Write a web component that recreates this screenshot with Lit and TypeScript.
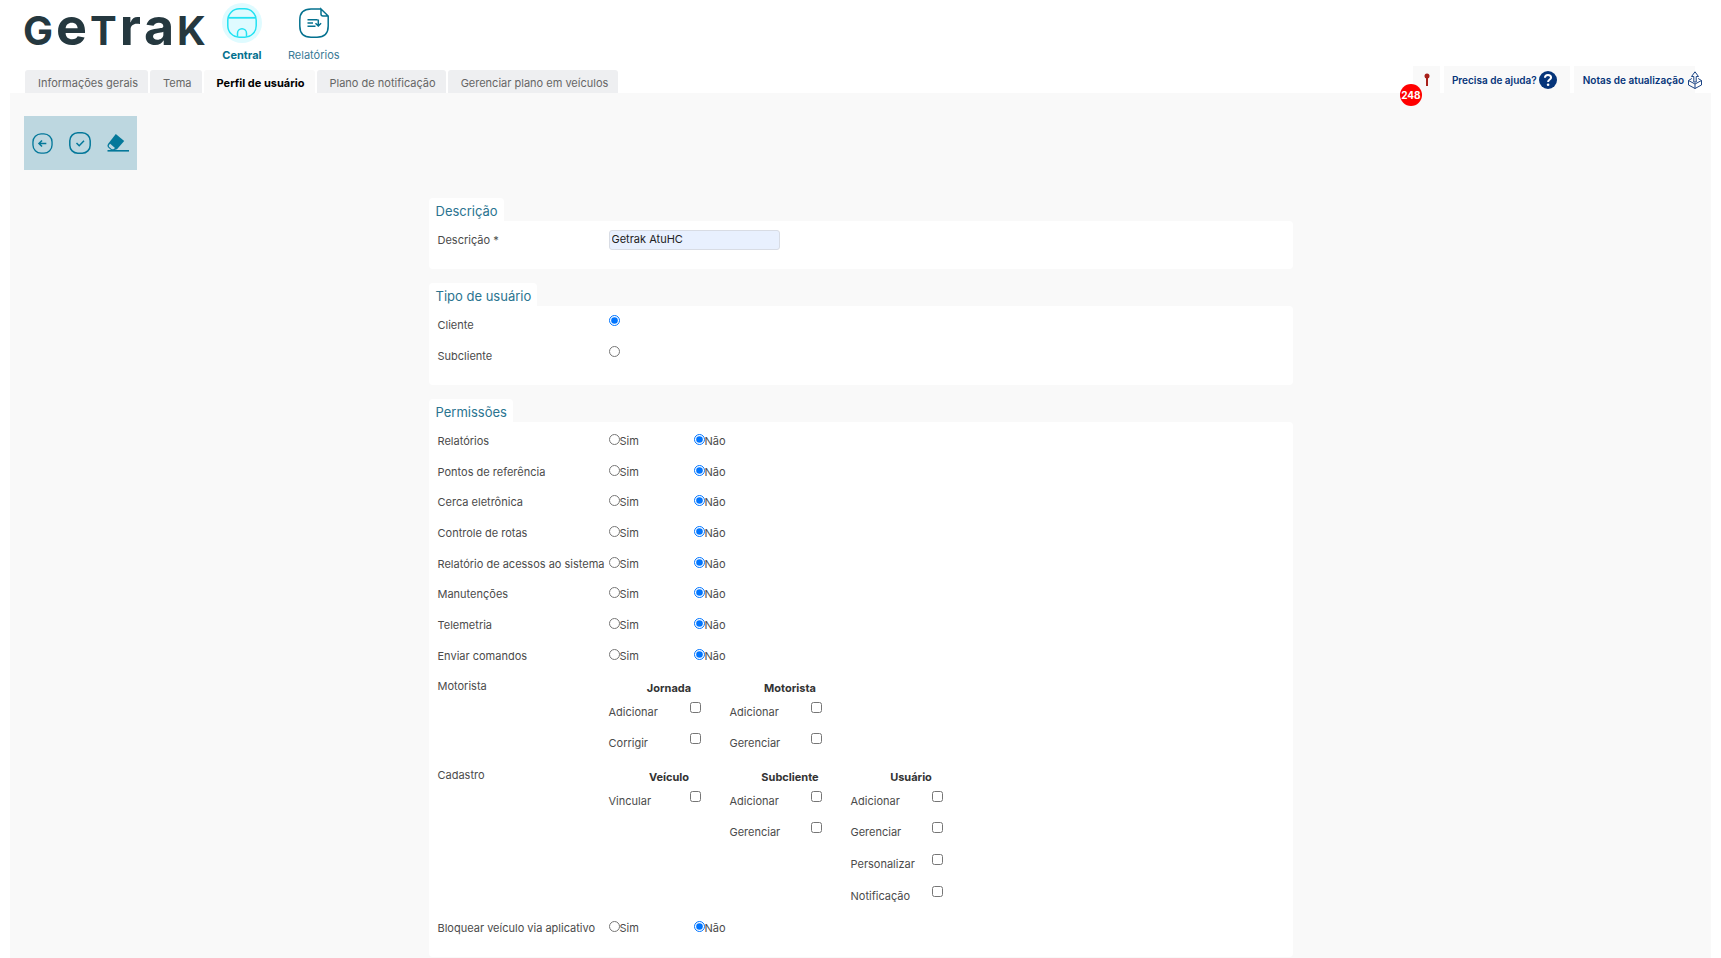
import { LitElement, html, css } from "lit";
import { customElement } from "lit/decorators.js";
import { classMap } from "lit/directives/class-map.js";

const TABS = ["Informações gerais", "Tema", "Perfil de usuário", "Plano de notificação", "Gerenciar plano em veículos"];
const ACTIVE_TAB = "Perfil de usuário";

const PERMISSIONS = [
  "Relatórios",
  "Pontos de referência",
  "Cerca eletrônica",
  "Controle de rotas",
  "Relatório de acessos ao sistema",
  "Manutenções",
  "Telemetria",
  "Enviar comandos",
];

interface Group {
  title: string;
  options: string[];
}

const DRIVER: Group[] = [
  { title: "Jornada", options: ["Adicionar", "Corrigir"] },
  { title: "Motorista", options: ["Adicionar", "Gerenciar"] },
];

const REGISTER: Group[] = [
  { title: "Veículo", options: ["Vincular"] },
  { title: "Subcliente", options: ["Adicionar", "Gerenciar"] },
  { title: "Usuário", options: ["Adicionar", "Gerenciar", "Personalizar", "Notificação"] },
];

const centralIcon = html`<svg width="40" height="40" viewBox="0 0 40 40" aria-hidden="true">
  <circle cx="20" cy="20" r="20" fill="#dffbff" />
  <g fill="none" stroke="#22e2f2" stroke-width="1.5">
    <rect x="5.8" y="5.8" width="28.4" height="28.4" rx="11.5" />
    <path d="M6.500 14.800H33.500" stroke-width="1.800" />
    <path d="M15.5 33.800v-3.600a4.5 4.5 0 0 1 9 0v3.600" />
  </g>
</svg>`;

const reportIcon = html`<svg width="40" height="40" viewBox="0 0 40 40" aria-hidden="true">
  <g fill="none" stroke="#04718f" stroke-width="1.5">
    <path d="M27 6H17C9.500 6 5.800 9.500 5.800 17V23C5.800 30.500 9.500 34.200 17 34.200H23C30.500 34.200 34.200 30.500 34.200 23V13L27 6V11Q27 13 29 13H34.200" />
    <path d="M13.500 16.800h10M13.500 20h5.500M13.500 23.200h8M24.300 16.500v7M21.500 20.300l2.800 2.700 2.800-2.700" />
  </g>
</svg>`;

const backIcon = html`<svg width="21" height="21" viewBox="0 0 22 22" fill="none" stroke="#04789a" stroke-width="1.400" aria-hidden="true">
  <rect x="1" y="1" width="20" height="20" rx="8.500" />
  <path d="M15 11H7.500M10.500 7.800L7.300 11l3.200 3.200" stroke-width="1.600" />
</svg>`;

const checkIcon = html`<svg width="22" height="22" viewBox="0 0 22 22" fill="none" stroke="#04789a" stroke-width="1.500" aria-hidden="true">
  <rect x="0.800" y="0.800" width="20.400" height="20.400" rx="8" />
  <path d="M7.500 11l2.700 2.700 4.800-5" />
</svg>`;

const eraserIcon = html`<svg width="22" height="22" viewBox="0 0 22 22" aria-hidden="true">
  <path d="M8.800 2L17.200 9L10 17.300L7.500 18H4L0.800 15Q0 13.500 1 12Z" fill="#04789a" />
  <path d="M3.200 11.800L8 16L6.500 17.300H4.800L2 14.800Q1.400 13.800 2.200 12.800Z" fill="#bdd7e0" />
  <path d="M0.500 18.800H22" stroke="#04789a" stroke-width="1.600" />
</svg>`;

const pinIcon = html`<svg width="6" height="14" viewBox="0 0 6 14" aria-hidden="true">
  <rect x="2" y="4" width="2" height="9" fill="#a8201a" />
  <circle cx="3" cy="3" r="2.500" fill="#a8201a" />
</svg>`;

const helpIcon = html`<svg width="18" height="18" viewBox="0 0 18 18" aria-hidden="true">
  <circle cx="9" cy="9" r="9" fill="#06357a" />
  <path d="M5.900 6.800Q6 3.900 9 3.900T12.100 6.600C12.100 8.600 9.100 8.500 9.100 11" fill="none" stroke="#fff" stroke-width="2" />
  <circle cx="9.100" cy="13.700" r="1.300" fill="#fff" />
</svg>`;

const notesIcon = html`<svg width="14" height="18" viewBox="0 0 14 18" fill="none" stroke="#1c4585" stroke-width="1" aria-hidden="true">
  <path d="M5.800 11V5.500H3.500L7 0.800L10.500 5.500H8.200V11Z" />
  <path d="M3.800 7.500L0.500 9.500L7 13L13.500 9.500L10.200 7.500" />
  <path d="M0.500 9.500V14L7 17.500L13.500 14V9.500M7 13V17.500" />
</svg>`;

@customElement("app-root")
export class AppRoot extends LitElement {
  static styles = css`
    :host {
      display: block;
      min-height: 100vh;
      background: #fff;
      color: #4b4b4b;
      font: 11px/16px Inter, "Liberation Sans", sans-serif;
    }
    * {
      box-sizing: border-box;
    }
    svg {
      display: block;
    }
    a {
      color: inherit;
      text-decoration: none;
    }
    .page {
      display: flex;
      flex-direction: column;
      min-height: 100vh;
      padding: 0 10px;
    }
    .top {
      display: flex;
      gap: 16px;
      height: 66px;
      padding-left: 13px;
    }
    .logo {
      display: flex;
      align-items: baseline;
      gap: 3px;
      font-size: 40px;
      line-height: 54px;
      font-weight: 700;
      color: #25383f;
    }
    .tall {
      font-size: 52px;
    }
    .modules {
      display: flex;
      gap: 26px;
      padding-top: 3px;
    }
    .module {
      display: flex;
      flex-direction: column;
      align-items: center;
      gap: 4px;
      color: #3a7a96;
    }
    .module.active {
      color: #04718f;
      font-weight: 700;
    }
    .bar {
      display: flex;
      justify-content: space-between;
      align-items: flex-end;
      padding: 0 16px 0 15px;
    }
    .tabs {
      display: flex;
      gap: 2px;
    }
    .tab {
      height: 23px;
      padding: 0 10px 0 13px;
      border-radius: 3px 3px 0 0;
      background: #eeeff1;
      color: #666;
      line-height: 26px;
    }
    .tab.active {
      background: #f9f9f9;
      color: #000;
      font-weight: 700;
    }
    .links {
      display: flex;
      gap: 4px;
      color: #06357a;
      font-size: 10px;
      font-weight: 600;
    }
    .link {
      position: relative;
      display: flex;
      align-items: center;
      gap: 2px;
      height: 27px;
      padding: 0 13px 0 8px;
      background: #f9f9f9;
    }
    .link.pin {
      padding: 0 10px 0 11px;
    }
    .link.notes {
      gap: 4px;
      padding: 0 0 0 9px;
      margin-right: -7px;
      background: linear-gradient(to left, #fff 7px, #f9f9f9 7px);
    }
    .badge {
      position: absolute;
      top: 18px;
      left: -13px;
      width: 22px;
      height: 22px;
      border-radius: 50%;
      background: #f00;
      color: #fff;
      font-weight: 700;
      line-height: 22px;
      text-align: center;
    }
    .content {
      flex: 1;
      padding: 23px 14px 0;
      background: #f9f9f9;
    }
    .toolbar {
      display: flex;
      align-items: center;
      gap: 16px;
      width: max-content;
      height: 54px;
      padding: 0 8px;
      background: #bdd7e0;
    }
    .tool {
      padding: 0;
      border: 0;
      background: none;
    }
    form {
      width: 100%;
      max-width: 864px;
      margin: 28px auto 0;
    }
    fieldset {
      min-width: 0;
      margin: 0 0 14px;
      padding: 0;
      border: 0;
    }
    fieldset:last-child {
      margin: 0;
    }
    legend {
      height: 23px;
      padding: 3px 6px 0 7px;
      border-radius: 4px 4px 0 0;
      background: #fff;
      color: #2a7490;
      font-size: 13px;
      line-height: 20px;
    }
    .panel {
      padding: 4px 9px 13px;
      border-radius: 0 4px 4px 4px;
      background: #fff;
    }
    .row {
      display: grid;
      grid-template-columns: 171px 1fr;
      height: 31px;
      padding-top: 7px;
    }
    .permissions .row:nth-child(3n + 2):not(:last-child) {
      height: 30px;
    }
    .field {
      width: 171px;
      height: 20px;
      margin-top: -2px;
      padding: 0 2px 2px;
      border: 1px solid #d8dce4;
      border-radius: 3px;
      background: #e8f0fe;
      color: #222;
      font: inherit;
    }
    input[type="radio"],
    input[type="checkbox"] {
      width: 11px;
      height: 11px;
      margin: 0;
    }
    .type input[type="radio"] {
      margin-top: -2px;
    }
    .choices {
      display: grid;
      grid-template-columns: 85px 85px;
    }
    .choice {
      display: flex;
      align-items: flex-start;
    }
    .choice input[type="radio"] {
      margin-top: 1px;
    }
    .group-row {
      display: grid;
      grid-template-columns: 171px 1fr;
      padding: 7px 0 1px;
    }
    .groups {
      display: flex;
      padding-top: 2px;
    }
    .group {
      width: 121px;
    }
    .group-title {
      font-weight: 700;
      color: #333;
      text-align: center;
    }
    .option {
      display: grid;
      grid-template-columns: 81px 1fr;
      height: 32px;
      padding-top: 8px;
    }
    .option:nth-child(2) {
      height: 31px;
    }
    .option input[type="checkbox"] {
      margin-top: -2px;
    }
  `;

  private yesNo(name: string, index: number) {
    return html`<div class="row" role="radiogroup" aria-label=${name}>
      <span>${name}</span>
      <span class="choices">
        <label class="choice"><input type="radio" name="perm-${index}" />Sim</label>
        <label class="choice"><input type="radio" name="perm-${index}" checked />Não</label>
      </span>
    </div>`;
  }

  private groupRow(name: string, groups: Group[]) {
    return html`<div class="group-row">
      <span>${name}</span>
      <div class="groups">
        ${groups.map(
          (g) => html`<div class="group" role="group" aria-label=${g.title}>
            <div class="group-title">${g.title}</div>
            ${g.options.map((o) => html`<label class="option"><span>${o}</span><input type="checkbox" /></label>`)}
          </div>`
        )}
      </div>
    </div>`;
  }

  render() {
    return html`<div class="page">
      <header class="top">
        <a class="logo" href="#" aria-label="Getrak"
          ><span>G</span><span class="tall">e</span><span>T</span><span class="tall">r</span><span class="tall">a</span><span>K</span></a
        >
        <nav class="modules">
          <a class="module active" href="#">${centralIcon}<span>Central</span></a>
          <a class="module" href="#">${reportIcon}<span>Relatórios</span></a>
        </nav>
      </header>
      <div class="bar">
        <nav class="tabs">
          ${TABS.map((t) => html`<a href="#" class=${classMap({ tab: true, active: t === ACTIVE_TAB })}>${t}</a>`)}
        </nav>
        <div class="links">
          <a class="link pin" href="#" aria-label="Alertas">${pinIcon}<span class="badge">248</span></a>
          <a class="link" href="#">Precisa de ajuda?${helpIcon}</a>
          <a class="link notes" href="#">Notas de atualização${notesIcon}</a>
        </div>
      </div>
      <main class="content">
        <div class="toolbar">
          <button class="tool" type="button" aria-label="Voltar">${backIcon}</button>
          <button class="tool" type="button" aria-label="Salvar">${checkIcon}</button>
          <button class="tool" type="button" aria-label="Limpar">${eraserIcon}</button>
        </div>
        <form>
          <fieldset>
            <legend>Descrição</legend>
            <div class="panel">
              <div class="row">
                <label for="description">Descrição *</label>
                <input id="description" class="field" type="text" value="Getrak AtuHC" />
              </div>
            </div>
          </fieldset>
          <fieldset>
            <legend>Tipo de usuário</legend>
            <div class="panel">
              <div class="row type">
                <label for="client">Cliente</label><input id="client" type="radio" name="type" checked />
              </div>
              <div class="row type">
                <label for="subclient">Subcliente</label><input id="subclient" type="radio" name="type" />
              </div>
            </div>
          </fieldset>
          <fieldset>
            <legend>Permissões</legend>
            <div class="panel permissions">
              ${PERMISSIONS.map((p, i) => this.yesNo(p, i))} ${this.groupRow("Motorista", DRIVER)}
              ${this.groupRow("Cadastro", REGISTER)} ${this.yesNo("Bloquear veículo via aplicativo", PERMISSIONS.length)}
            </div>
          </fieldset>
        </form>
      </main>
    </div>`;
  }
}
